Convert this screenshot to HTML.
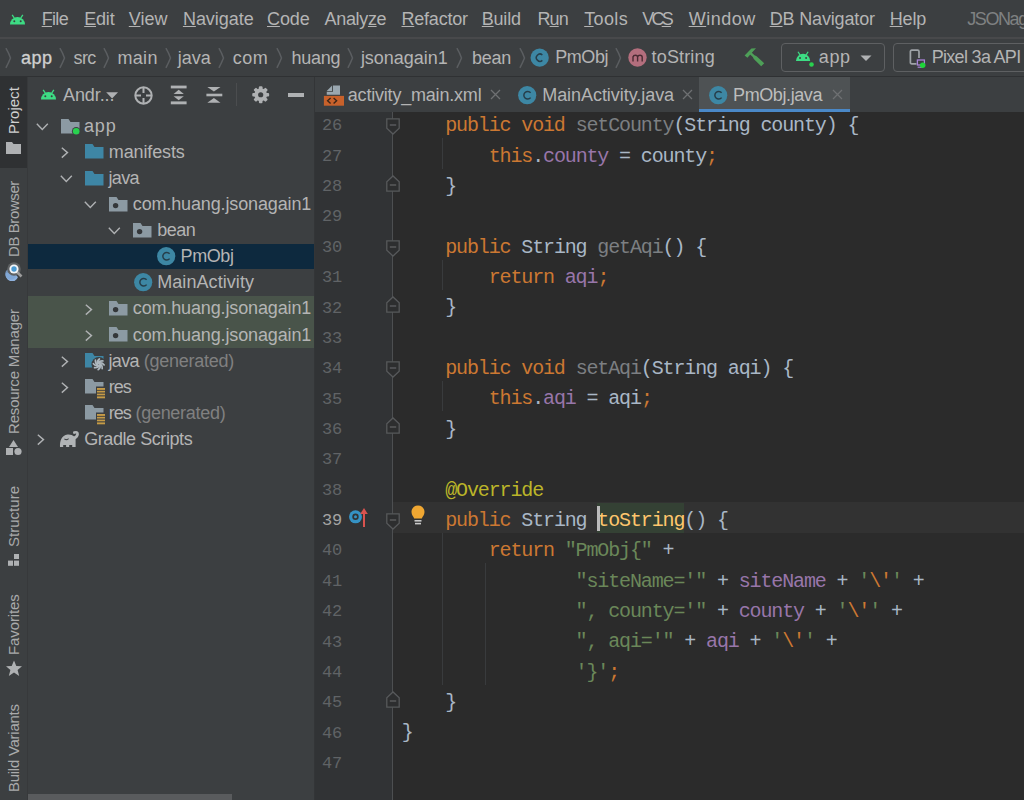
<!DOCTYPE html><html><head><meta charset="utf-8"><style>
html,body{margin:0;padding:0}
body{width:1024px;height:800px;overflow:hidden;position:relative;background:#3C3F41;font-family:"Liberation Sans",sans-serif}
.r{position:absolute;display:block}
.t{position:absolute;white-space:pre;font-family:"Liberation Sans",sans-serif;line-height:1.15}
.t u{text-decoration:underline;text-underline-offset:1px}
.m{position:absolute;white-space:pre;font-family:"Liberation Mono",monospace;line-height:1.133}
</style></head><body>
<div class="r" style="left:0px;top:0px;width:1024px;height:37px;background:#3C3F41;"></div>
<div class="r" style="left:0px;top:37px;width:1024px;height:2px;background:#48494B;"></div>
<div class="r" style="left:0px;top:39px;width:1024px;height:37px;background:#3C3F41;"></div>
<div class="r" style="left:0px;top:75.5px;width:1024px;height:1.5px;background:#2F3133;"></div>
<div class="r" style="left:0px;top:77px;width:27px;height:723px;background:#3C3F41;"></div>
<div class="r" style="left:0px;top:77px;width:27px;height:91px;background:#2F3133;"></div>
<div class="r" style="left:27px;top:77px;width:1px;height:723px;background:#37393B;"></div>
<div class="r" style="left:28px;top:77px;width:286px;height:723px;background:#3C3F41;"></div>
<div class="r" style="left:314px;top:77px;width:1px;height:723px;background:#333537;"></div>
<div class="r" style="left:315px;top:77px;width:709px;height:35px;background:#3C3F41;"></div>
<div class="r" style="left:699px;top:77px;width:151px;height:35px;background:#4E5254;"></div>
<div class="r" style="left:699px;top:108.5px;width:151px;height:4.5px;background:#4A88C7;"></div>
<div class="r" style="left:315px;top:112px;width:77px;height:688px;background:#313335;"></div>
<div class="r" style="left:392px;top:112px;width:1px;height:688px;background:#4D4F51;"></div>
<div class="r" style="left:393px;top:112px;width:631px;height:688px;background:#2B2B2B;"></div>
<svg class="r" style="left:9px;top:13.8px;" width="21" height="18" viewBox="0 0 21 18"><g transform="scale(1.0)"><path d="M1 10.5 A7.5 7.5 0 0 1 16 10.5 Z" fill="#3DDC84"/><line x1="3.2" y1="0.8" x2="5.2" y2="4" stroke="#3DDC84" stroke-width="1.3"/><line x1="13.8" y1="0.8" x2="11.8" y2="4" stroke="#3DDC84" stroke-width="1.3"/><circle cx="5.3" cy="7.3" r="1" fill="#3C3F41"/><circle cx="11.7" cy="7.3" r="1" fill="#3C3F41"/></g></svg>
<div class="t" style="left:41.7px;top:8.7px;font-size:18px;color:#B4B4B4;letter-spacing:-0.67px"><u>F</u>ile</div>
<div class="t" style="left:84.2px;top:8.7px;font-size:18px;color:#B4B4B4;letter-spacing:-0.17px"><u>E</u>dit</div>
<div class="t" style="left:128.8px;top:8.7px;font-size:18px;color:#B4B4B4;letter-spacing:0.00px"><u>V</u>iew</div>
<div class="t" style="left:182.9px;top:8.7px;font-size:18px;color:#B4B4B4;letter-spacing:-0.03px"><u>N</u>avigate</div>
<div class="t" style="left:267.0px;top:8.7px;font-size:18px;color:#B4B4B4;letter-spacing:-0.11px"><u>C</u>ode</div>
<div class="t" style="left:324.6px;top:8.7px;font-size:18px;color:#B4B4B4;letter-spacing:-0.34px">Analy<u>z</u>e</div>
<div class="t" style="left:401.5px;top:8.7px;font-size:18px;color:#B4B4B4;letter-spacing:-0.22px"><u>R</u>efactor</div>
<div class="t" style="left:481.8px;top:8.7px;font-size:18px;color:#B4B4B4;letter-spacing:-0.23px"><u>B</u>uild</div>
<div class="t" style="left:537.5px;top:8.7px;font-size:18px;color:#B4B4B4;letter-spacing:-0.91px">R<u>u</u>n</div>
<div class="t" style="left:584.2px;top:8.7px;font-size:18px;color:#B4B4B4;letter-spacing:0.37px"><u>T</u>ools</div>
<div class="t" style="left:642.2px;top:8.7px;font-size:18px;color:#B4B4B4;letter-spacing:-2.76px">VC<u>S</u></div>
<div class="t" style="left:688.7px;top:8.7px;font-size:18px;color:#B4B4B4;letter-spacing:0.50px"><u>W</u>indow</div>
<div class="t" style="left:769.7px;top:8.7px;font-size:18px;color:#B4B4B4;letter-spacing:-0.16px"><u>D</u>B Navigator</div>
<div class="t" style="left:889.7px;top:8.7px;font-size:18px;color:#B4B4B4;letter-spacing:-0.11px"><u>H</u>elp</div>
<div class="t" style="left:967.2px;top:8.7px;font-size:18px;color:#7F8182;letter-spacing:0.00px;letter-spacing:-1.4px">JSONagain1 [</div>
<svg class="r" style="left:5px;top:48px;" width="7" height="21" viewBox="0 0 7 21"><path d="M0.9 0.2 Q3.5 4.5 5.5 10 Q3.5 15 0.9 19.8" fill="none" stroke="#5B5E61" stroke-width="1.5"/></svg>
<div class="t" style="left:20.9px;top:47.8px;font-size:18px;color:#CFCFCF;letter-spacing:0.53px;-webkit-text-stroke:0.35px #CFCFCF;">app</div>
<svg class="r" style="left:59.3px;top:48px;" width="7" height="21" viewBox="0 0 7 21"><path d="M0.9 0.2 Q3.5 4.5 5.5 10 Q3.5 15 0.9 19.8" fill="none" stroke="#5B5E61" stroke-width="1.5"/></svg>
<div class="t" style="left:73.6px;top:47.8px;font-size:18px;color:#B4B4B4;letter-spacing:-0.65px;">src</div>
<svg class="r" style="left:103px;top:48px;" width="7" height="21" viewBox="0 0 7 21"><path d="M0.9 0.2 Q3.5 4.5 5.5 10 Q3.5 15 0.9 19.8" fill="none" stroke="#5B5E61" stroke-width="1.5"/></svg>
<div class="t" style="left:117.5px;top:47.8px;font-size:18px;color:#B4B4B4;letter-spacing:0.30px;">main</div>
<svg class="r" style="left:164.7px;top:48px;" width="7" height="21" viewBox="0 0 7 21"><path d="M0.9 0.2 Q3.5 4.5 5.5 10 Q3.5 15 0.9 19.8" fill="none" stroke="#5B5E61" stroke-width="1.5"/></svg>
<div class="t" style="left:177.8px;top:47.8px;font-size:18px;color:#B4B4B4;letter-spacing:-0.04px;">java</div>
<svg class="r" style="left:218px;top:48px;" width="7" height="21" viewBox="0 0 7 21"><path d="M0.9 0.2 Q3.5 4.5 5.5 10 Q3.5 15 0.9 19.8" fill="none" stroke="#5B5E61" stroke-width="1.5"/></svg>
<div class="t" style="left:232.7px;top:47.8px;font-size:18px;color:#B4B4B4;letter-spacing:0.50px;">com</div>
<svg class="r" style="left:275.6px;top:48px;" width="7" height="21" viewBox="0 0 7 21"><path d="M0.9 0.2 Q3.5 4.5 5.5 10 Q3.5 15 0.9 19.8" fill="none" stroke="#5B5E61" stroke-width="1.5"/></svg>
<div class="t" style="left:291.4px;top:47.8px;font-size:18px;color:#B4B4B4;letter-spacing:-0.24px;">huang</div>
<svg class="r" style="left:347px;top:48px;" width="7" height="21" viewBox="0 0 7 21"><path d="M0.9 0.2 Q3.5 4.5 5.5 10 Q3.5 15 0.9 19.8" fill="none" stroke="#5B5E61" stroke-width="1.5"/></svg>
<div class="t" style="left:360.9px;top:47.8px;font-size:18px;color:#B4B4B4;letter-spacing:-0.03px;">jsonagain1</div>
<svg class="r" style="left:456px;top:48px;" width="7" height="21" viewBox="0 0 7 21"><path d="M0.9 0.2 Q3.5 4.5 5.5 10 Q3.5 15 0.9 19.8" fill="none" stroke="#5B5E61" stroke-width="1.5"/></svg>
<div class="t" style="left:472.0px;top:47.8px;font-size:18px;color:#B4B4B4;letter-spacing:-0.28px;">bean</div>
<svg class="r" style="left:518.5px;top:48px;" width="7" height="21" viewBox="0 0 7 21"><path d="M0.9 0.2 Q3.5 4.5 5.5 10 Q3.5 15 0.9 19.8" fill="none" stroke="#5B5E61" stroke-width="1.5"/></svg>
<svg class="r" style="left:530px;top:47.6px;" width="19.3" height="19.3" viewBox="0 0 19.3 19.3"><circle cx="9.65" cy="9.65" r="9.15" fill="#3D87A4"/><path d="M12.350000000000001 6.95 A3.6 3.6 0 1 0 12.350000000000001 12.350000000000001" fill="none" stroke="#263E4A" stroke-width="1.5"/></svg>
<div class="t" style="left:555.2px;top:47.3px;font-size:18px;color:#B4B4B4;letter-spacing:-0.43px;">PmObj</div>
<svg class="r" style="left:615px;top:48px;" width="7" height="21" viewBox="0 0 7 21"><path d="M0.9 0.2 Q3.5 4.5 5.5 10 Q3.5 15 0.9 19.8" fill="none" stroke="#5B5E61" stroke-width="1.5"/></svg>
<svg class="r" style="left:627.5px;top:47.6px;" width="19.5" height="19.5" viewBox="0 0 19.5 19.5"><circle cx="9.5" cy="9.5" r="9.2" fill="#B36E7D"/><path d="M5 13.6 V8.2 M5 9.2 Q5.4 7.3 7.4 7.3 Q9.6 7.3 9.6 9.2 V13.6 M9.6 9.2 Q10 7.3 12 7.3 Q14.2 7.3 14.2 9.2 V13.6" fill="none" stroke="#4A2B33" stroke-width="1.4"/></svg>
<div class="t" style="left:651.6px;top:47.3px;font-size:18px;color:#B4B4B4;letter-spacing:0.15px;">toString</div>
<svg class="r" style="left:735px;top:40px;" width="40" height="32" viewBox="0 0 40 32"><path d="M9.6 15.4 L16.4 8.6 L21 8.3 L17.5 12 L12.4 17.8 Z" fill="#4E9F58"/><path d="M15.5 11.5 L19.5 15.3 L21.6 16.2 L29.2 23.3 L26.2 26.3 L18.8 19 L17.8 17 L14 13.6 Z" fill="#4E9F58"/></svg>
<div class="r" style="left:780.5px;top:43px;width:104.5px;height:29px;background:transparent;border:1.3px solid #5E6062;border-radius:4px;box-sizing:border-box"></div>
<svg class="r" style="left:794.5px;top:51px;" width="21" height="18" viewBox="0 0 21 18"><g transform="scale(0.95)"><path d="M1 10.5 A7.5 7.5 0 0 1 16 10.5 Z" fill="#3DDC84"/><line x1="3.2" y1="0.8" x2="5.2" y2="4" stroke="#3DDC84" stroke-width="1.3"/><line x1="13.8" y1="0.8" x2="11.8" y2="4" stroke="#3DDC84" stroke-width="1.3"/><circle cx="5.3" cy="7.3" r="1" fill="#3C3F41"/><circle cx="11.7" cy="7.3" r="1" fill="#3C3F41"/></g><circle cx="16.5" cy="13.5" r="3" fill="#3C3F41"/><circle cx="16.5" cy="13.5" r="2.3" fill="#29D14F"/></svg>
<div class="t" style="left:818.8px;top:47.3px;font-size:18px;color:#B4B4B4;letter-spacing:0.63px;">app</div>
<svg class="r" style="left:860px;top:55px;" width="12" height="7" viewBox="0 0 12 7"><path d="M0.5 0.5 L11.5 0.5 L6 6 Z" fill="#AFB1B3"/></svg>
<div class="r" style="left:892.5px;top:43px;width:140px;height:29px;background:transparent;border:1.3px solid #5E6062;border-radius:4px;box-sizing:border-box"></div>
<svg class="r" style="left:908px;top:48px;" width="22" height="22" viewBox="0 0 22 22"><path d="M8.5 15.8 H3.8 Q2.4 15.8 2.4 14.4 V3.6 Q2.4 2.2 3.8 2.2 H9.6 Q11 2.2 11 3.6 V10" fill="none" stroke="#9EA3A7" stroke-width="1.7"/><rect x="9.4" y="12" width="7" height="5" fill="none" stroke="#A883D8" stroke-width="1.3"/><path d="M9.6 19.2 H15" stroke="#A883D8" stroke-width="1.2"/><circle cx="14.7" cy="17.2" r="2.7" fill="#1ED63A"/></svg>
<div class="t" style="left:931.7px;top:47.3px;font-size:18px;color:#B4B4B4;letter-spacing:-0.69px;">Pixel 3a API</div>
<div class="t" style="left:4.6px;top:133.5px;font-size:15px;color:#D0D0D0;letter-spacing:0.02px;transform-origin:0 0;transform:rotate(-90deg);line-height:17.2px">Project</div>
<svg class="r" style="left:6px;top:140.5px;" width="16" height="14" viewBox="0 0 16 14"><path d="M0 1 L6 1 L7.5 3 L15 3 L15 13 L0 13 Z" fill="#AFB1B3"/></svg>
<div class="t" style="left:4.6px;top:257.2px;font-size:15px;color:#A9AAAB;letter-spacing:-0.41px;transform-origin:0 0;transform:rotate(-90deg);line-height:17.2px">DB Browser</div>
<svg class="r" style="left:4px;top:261px;" width="20" height="20" viewBox="0 0 20 20"><path d="M2 12 A6 6 0 0 0 14 16 L8 11 Z" fill="#8FB2DE"/><circle cx="7" cy="13" r="5.8" fill="#7EA4D4" opacity="0.85"/><circle cx="10" cy="8" r="6.8" fill="#5F6264"/><line x1="13" y1="11" x2="17.5" y2="15.5" stroke="#9C9C9C" stroke-width="2.6"/><circle cx="10" cy="8" r="4.6" fill="#F2F5F8"/><circle cx="10" cy="8" r="2.7" fill="#4A9AD2"/></svg>
<div class="t" style="left:4.6px;top:434px;font-size:15px;color:#A9AAAB;letter-spacing:-0.17px;transform-origin:0 0;transform:rotate(-90deg);line-height:17.2px">Resource Manager</div>
<svg class="r" style="left:5px;top:439.2px;" width="18" height="17" viewBox="0 0 18 17"><path d="M8.5 1 L13 8 L4 8 Z" fill="#AFB1B3"/><rect x="1" y="9" width="7" height="7" fill="#AFB1B3"/><circle cx="13" cy="12.5" r="3.6" fill="#AFB1B3"/></svg>
<div class="t" style="left:4.6px;top:547px;font-size:15px;color:#A9AAAB;letter-spacing:0.02px;transform-origin:0 0;transform:rotate(-90deg);line-height:17.2px">Structure</div>
<svg class="r" style="left:7px;top:553px;" width="14" height="14" viewBox="0 0 14 14"><rect x="1" y="7.6" width="5" height="5.2" fill="#AFB1B3"/><rect x="7" y="7.6" width="5" height="5.2" fill="#AFB1B3"/><rect x="7" y="1" width="5" height="5" fill="#AFB1B3"/></svg>
<div class="t" style="left:4.6px;top:654.8px;font-size:15px;color:#A9AAAB;letter-spacing:-0.11px;transform-origin:0 0;transform:rotate(-90deg);line-height:17.2px">Favorites</div>
<svg class="r" style="left:5px;top:660px;" width="18" height="17" viewBox="0 0 18 17"><path d="M9 0.5 L11.3 6 L17 6.3 L12.6 10 L14.2 16 L9 12.6 L3.8 16 L5.4 10 L1 6.3 L6.7 6 Z" fill="#AFB1B3"/></svg>
<div class="t" style="left:4.6px;top:792.4px;font-size:15px;color:#A9AAAB;letter-spacing:-0.27px;transform-origin:0 0;transform:rotate(-90deg);line-height:17.2px">Build Variants</div>
<svg class="r" style="left:40px;top:88.5px;" width="21" height="18" viewBox="0 0 21 18"><g transform="scale(1.0)"><path d="M1 10.5 A7.5 7.5 0 0 1 16 10.5 Z" fill="#3DDC84"/><line x1="3.2" y1="0.8" x2="5.2" y2="4" stroke="#3DDC84" stroke-width="1.3"/><line x1="13.8" y1="0.8" x2="11.8" y2="4" stroke="#3DDC84" stroke-width="1.3"/><circle cx="5.3" cy="7.3" r="1" fill="#3C3F41"/><circle cx="11.7" cy="7.3" r="1" fill="#3C3F41"/></g></svg>
<div class="t" style="left:63.0px;top:84.7px;font-size:18px;color:#B4B4B4;letter-spacing:-0.09px;">Andr...</div>
<svg class="r" style="left:105.5px;top:91.6px;" width="13" height="8" viewBox="0 0 13 8"><path d="M0.2 0.2 L12 0.2 L6.1 6.4 Z" fill="#AFB1B3"/></svg>
<svg class="r" style="left:133px;top:85px;" width="21" height="21" viewBox="0 0 21 21"><circle cx="10.5" cy="10.5" r="8.2" fill="none" stroke="#AFB1B3" stroke-width="2"/><path d="M10.5 2 V8 M10.5 13 V19 M2 10.5 H8 M13 10.5 H19" stroke="#AFB1B3" stroke-width="2"/></svg>
<svg class="r" style="left:169px;top:84px;" width="20" height="22" viewBox="0 0 20 22"><g fill="#AFB1B3"><rect x="1.8" y="1.6" width="15.8" height="2.8"/><rect x="1.8" y="17.4" width="15.8" height="2.9"/><path d="M4.6 10 L9.7 5.7 L14.8 10 Z"/><path d="M4.6 12.2 L9.7 16.2 L14.8 12.2 Z"/></g></svg>
<svg class="r" style="left:205px;top:84px;" width="20" height="22" viewBox="0 0 20 22"><g fill="#AFB1B3"><rect x="1.4" y="9.7" width="15.9" height="2.6"/><path d="M2.3 3 L15.5 3 L8.9 7.4 Z"/><path d="M2.3 18.8 L15.5 18.8 L8.9 14 Z"/></g></svg>
<div class="r" style="left:236px;top:82.6px;width:1px;height:23px;background:#4B4D4F;"></div>
<svg class="r" style="left:252px;top:86.2px;" width="18" height="18" viewBox="0 0 18 18"><g fill="#AFB1B3"><circle cx="8.7" cy="8.75" r="6.4"/><rect x="6.9" y="0.3" width="3.6" height="5" rx="1" transform="rotate(0 8.7 8.75)"/><rect x="6.9" y="0.3" width="3.6" height="5" rx="1" transform="rotate(45 8.7 8.75)"/><rect x="6.9" y="0.3" width="3.6" height="5" rx="1" transform="rotate(90 8.7 8.75)"/><rect x="6.9" y="0.3" width="3.6" height="5" rx="1" transform="rotate(135 8.7 8.75)"/><rect x="6.9" y="0.3" width="3.6" height="5" rx="1" transform="rotate(180 8.7 8.75)"/><rect x="6.9" y="0.3" width="3.6" height="5" rx="1" transform="rotate(225 8.7 8.75)"/><rect x="6.9" y="0.3" width="3.6" height="5" rx="1" transform="rotate(270 8.7 8.75)"/><rect x="6.9" y="0.3" width="3.6" height="5" rx="1" transform="rotate(315 8.7 8.75)"/></g><circle cx="8.7" cy="8.75" r="2.6" fill="#3C3F41"/></svg>
<div class="r" style="left:287.8px;top:93.2px;width:16.2px;height:3.5px;background:#AFB1B3;"></div>
<div class="r" style="left:28px;top:243.8px;width:286px;height:25.2px;background:#0D293E;"></div>
<div class="r" style="left:28px;top:296.0px;width:286px;height:52.2px;background:#49544A;"></div>
<svg class="r" style="left:35.5px;top:122.89999999999999px;" width="13" height="8" viewBox="0 0 13 8"><polyline points="0.8,0.8 6.3,6.5 11.8,0.8" fill="none" stroke="#AFB1B3" stroke-width="1.4"/></svg>
<svg class="r" style="left:60.8px;top:119.3px;" width="22" height="20" viewBox="0 0 22 20"><path d="M0 0 L7.5 0 L9.5 3 L18.5 3 L18.5 14.6 L0 14.6 Z" fill="#8C9AA3"/><circle cx="15.2" cy="12.3" r="4.3" fill="#3C3F41"/><circle cx="15.2" cy="12.3" r="3.3" fill="#29D14F"/></svg>
<div class="t" style="left:83.9px;top:115.7px;font-size:18px;color:#B4B4B4;letter-spacing:0.88px;">app</div>
<svg class="r" style="left:61.2px;top:146.9px;" width="8" height="12" viewBox="0 0 8 12"><polyline points="0.8,0.8 6.5,5.6 0.8,10.6" fill="none" stroke="#AFB1B3" stroke-width="1.4"/></svg>
<svg class="r" style="left:84.9px;top:144.4px;" width="22" height="20" viewBox="0 0 22 20"><path d="M0 0 L7.5 0 L9.5 3 L18.5 3 L18.5 14.6 L0 14.6 Z" fill="#3E86A5"/></svg>
<div class="t" style="left:108.8px;top:141.8px;font-size:18px;color:#B4B4B4;letter-spacing:-0.13px;">manifests</div>
<svg class="r" style="left:59.5px;top:175.1px;" width="13" height="8" viewBox="0 0 13 8"><polyline points="0.8,0.8 6.3,6.5 11.8,0.8" fill="none" stroke="#AFB1B3" stroke-width="1.4"/></svg>
<svg class="r" style="left:84.9px;top:170.5px;" width="22" height="20" viewBox="0 0 22 20"><path d="M0 0 L7.5 0 L9.5 3 L18.5 3 L18.5 14.6 L0 14.6 Z" fill="#3E86A5"/></svg>
<div class="t" style="left:108.5px;top:167.9px;font-size:18px;color:#B4B4B4;letter-spacing:-0.67px;">java</div>
<svg class="r" style="left:84.3px;top:201.20000000000002px;" width="13" height="8" viewBox="0 0 13 8"><polyline points="0.8,0.8 6.3,6.5 11.8,0.8" fill="none" stroke="#AFB1B3" stroke-width="1.4"/></svg>
<svg class="r" style="left:109.1px;top:196.60000000000002px;" width="22" height="20" viewBox="0 0 22 20"><path d="M0 0 L7.5 0 L9.5 3 L18.5 3 L18.5 14.6 L0 14.6 Z" fill="#8C9AA3"/><circle cx="6.6" cy="8.6" r="2.7" fill="#34373A"/></svg>
<div class="t" style="left:132.8px;top:194.0px;font-size:18px;color:#B4B4B4;letter-spacing:-0.14px;">com.huang.jsonagain1</div>
<svg class="r" style="left:108.2px;top:227.29999999999998px;" width="13" height="8" viewBox="0 0 13 8"><polyline points="0.8,0.8 6.3,6.5 11.8,0.8" fill="none" stroke="#AFB1B3" stroke-width="1.4"/></svg>
<svg class="r" style="left:133px;top:222.7px;" width="22" height="20" viewBox="0 0 22 20"><path d="M0 0 L7.5 0 L9.5 3 L18.5 3 L18.5 14.6 L0 14.6 Z" fill="#8C9AA3"/><circle cx="6.6" cy="8.6" r="2.7" fill="#34373A"/></svg>
<div class="t" style="left:157.3px;top:220.1px;font-size:18px;color:#B4B4B4;letter-spacing:-0.51px;">bean</div>
<svg class="r" style="left:156.8px;top:247.3px;" width="20" height="20" viewBox="0 0 20 20"><circle cx="9.2" cy="9.2" r="9.1" fill="#3D87A4"/><path d="M12.6 6.8 A3.8 3.8 0 1 0 12.6 11.6" fill="none" stroke="#263E4A" stroke-width="1.5"/></svg>
<div class="t" style="left:180.5px;top:246.2px;font-size:18px;color:#B4B4B4;letter-spacing:-0.38px;">PmObj</div>
<svg class="r" style="left:133.6px;top:273.40000000000003px;" width="20" height="20" viewBox="0 0 20 20"><circle cx="9.2" cy="9.2" r="9.1" fill="#3D87A4"/><path d="M12.6 6.8 A3.8 3.8 0 1 0 12.6 11.6" fill="none" stroke="#263E4A" stroke-width="1.5"/></svg>
<div class="t" style="left:157.2px;top:272.3px;font-size:18px;color:#B4B4B4;letter-spacing:0.07px;">MainActivity</div>
<svg class="r" style="left:85.2px;top:303.5px;" width="8" height="12" viewBox="0 0 8 12"><polyline points="0.8,0.8 6.5,5.6 0.8,10.6" fill="none" stroke="#AFB1B3" stroke-width="1.4"/></svg>
<svg class="r" style="left:109.1px;top:301.0px;" width="22" height="20" viewBox="0 0 22 20"><path d="M0 0 L7.5 0 L9.5 3 L18.5 3 L18.5 14.6 L0 14.6 Z" fill="#8C9AA3"/><circle cx="6.6" cy="8.6" r="2.7" fill="#34373A"/></svg>
<div class="t" style="left:132.8px;top:298.4px;font-size:18px;color:#B4B4B4;letter-spacing:-0.14px;">com.huang.jsonagain1</div>
<svg class="r" style="left:85.2px;top:329.6px;" width="8" height="12" viewBox="0 0 8 12"><polyline points="0.8,0.8 6.5,5.6 0.8,10.6" fill="none" stroke="#AFB1B3" stroke-width="1.4"/></svg>
<svg class="r" style="left:109.1px;top:327.1px;" width="22" height="20" viewBox="0 0 22 20"><path d="M0 0 L7.5 0 L9.5 3 L18.5 3 L18.5 14.6 L0 14.6 Z" fill="#8C9AA3"/><circle cx="6.6" cy="8.6" r="2.7" fill="#34373A"/></svg>
<div class="t" style="left:132.8px;top:324.5px;font-size:18px;color:#B4B4B4;letter-spacing:-0.14px;">com.huang.jsonagain1</div>
<svg class="r" style="left:61.2px;top:355.7px;" width="8" height="12" viewBox="0 0 8 12"><polyline points="0.8,0.8 6.5,5.6 0.8,10.6" fill="none" stroke="#AFB1B3" stroke-width="1.4"/></svg>
<svg class="r" style="left:85px;top:353.2px;" width="22" height="20" viewBox="0 0 22 20"><path d="M0 0 L7.5 0 L9.5 3 L18.5 3 L18.5 14.6 L0 14.6 Z" fill="#3E86A5"/><circle cx="13.8" cy="11.35" r="7.3" fill="#3C3F41"/><path d="M15.00 11.35 Q17.40 11.53 17.16 15.58 M14.65 12.20 Q16.22 14.02 13.18 16.71 M13.80 12.55 Q13.62 14.95 9.57 14.71 M12.95 12.20 Q11.13 13.77 8.44 10.73 M12.60 11.35 Q10.20 11.17 10.44 7.12 M12.95 10.50 Q11.38 8.68 14.42 5.99 M13.80 10.15 Q13.98 7.75 18.03 7.99 M14.65 10.50 Q16.47 8.93 19.16 11.97 " fill="none" stroke="#AEB8BF" stroke-width="1.7" stroke-linecap="round"/></svg>
<div class="t" style="left:108.5px;top:350.6px;font-size:18px;color:#B4B4B4;letter-spacing:-0.67px;">java</div>
<div class="t" style="left:143.8px;top:350.6px;font-size:18px;color:#808080;letter-spacing:-0.26px;">(generated)</div>
<svg class="r" style="left:61.2px;top:381.8px;" width="8" height="12" viewBox="0 0 8 12"><polyline points="0.8,0.8 6.5,5.6 0.8,10.6" fill="none" stroke="#AFB1B3" stroke-width="1.4"/></svg>
<svg class="r" style="left:85px;top:379.3px;" width="22" height="20" viewBox="0 0 22 20"><path d="M0 0 L7.5 0 L9.5 3 L18.5 3 L18.5 14.6 L0 14.6 Z" fill="#8C9AA3"/><rect x="11" y="7.5" width="9" height="11.5" fill="#3C3F41"/><g fill="#C69B46"><rect x="12" y="9" width="8" height="1.9"/><rect x="12" y="11.8" width="8" height="1.7"/><rect x="12" y="14.6" width="8" height="1.7"/><rect x="12" y="17.4" width="8" height="1.9"/></g></svg>
<div class="t" style="left:108.7px;top:376.7px;font-size:18px;color:#B4B4B4;letter-spacing:-1.00px;">res</div>
<svg class="r" style="left:85px;top:405.40000000000003px;" width="22" height="20" viewBox="0 0 22 20"><path d="M0 0 L7.5 0 L9.5 3 L18.5 3 L18.5 14.6 L0 14.6 Z" fill="#8C9AA3"/><rect x="11" y="7.5" width="9" height="11.5" fill="#3C3F41"/><g fill="#C69B46"><rect x="12" y="9" width="8" height="1.9"/><rect x="12" y="11.8" width="8" height="1.7"/><rect x="12" y="14.6" width="8" height="1.7"/><rect x="12" y="17.4" width="8" height="1.9"/></g></svg>
<div class="t" style="left:108.7px;top:402.8px;font-size:18px;color:#B4B4B4;letter-spacing:-1.00px;">res</div>
<div class="t" style="left:135.5px;top:402.8px;font-size:18px;color:#808080;letter-spacing:-0.29px;">(generated)</div>
<svg class="r" style="left:36.5px;top:434.00000000000006px;" width="8" height="12" viewBox="0 0 8 12"><polyline points="0.8,0.8 6.5,5.6 0.8,10.6" fill="none" stroke="#AFB1B3" stroke-width="1.4"/></svg>
<svg class="r" style="left:56px;top:428px;" width="28" height="22" viewBox="0 0 28 22"><path d="M4 19 C3.8 13 5.5 7.5 11.5 6.6 C14.5 6.3 16.5 7.3 18.2 8.6 L19.6 10 L19.6 19 L16.2 19 L16.2 16.9 L13.2 16.9 L13.2 19 L10.1 19 L10.1 16.9 L7.2 16.9 L7.2 19 Z" fill="#B1B4B6"/><path d="M17.8 10.2 Q21.3 9 21.6 6 Q21.6 3.6 18.3 4.6" fill="none" stroke="#B1B4B6" stroke-width="2.6" stroke-linecap="round"/><path d="M8.4 10.8 Q10.4 12.6 12.6 10.6" fill="none" stroke="#45484A" stroke-width="1.1"/></svg>
<div class="t" style="left:84.2px;top:428.9px;font-size:18px;color:#B4B4B4;letter-spacing:-0.43px;">Gradle Scripts</div>
<div class="r" style="left:28px;top:794px;width:204px;height:6px;background:#595B5D;"></div>
<svg class="r" style="left:320px;top:80px;" width="30" height="30" viewBox="0 0 30 30"><path d="M13 5.6 H20 V14.8 H6.75 V11.8 H13 Z" fill="#9AA7B0"/><path d="M6.75 10.9 L12.1 5.6 L12.1 10.9 Z" fill="#9AA7B0"/><rect x="3.9" y="15.9" width="20.1" height="9.8" fill="#C8612B"/><path d="M10.6 18 L7.6 20.8 L10.6 23.6 M13.6 18 L16.6 20.8 L13.6 23.6" fill="none" stroke="#3B2518" stroke-width="1.4"/></svg>
<div class="t" style="left:347.8px;top:84.7px;font-size:18px;color:#B4B4B4;letter-spacing:-0.20px;">activity_main.xml</div>
<svg class="r" style="left:490.3px;top:89px;" width="11" height="11" viewBox="0 0 11 11"><path d="M1 1 L10 10 M10 1 L1 10" stroke="#6E7072" stroke-width="1.3"/></svg>
<svg class="r" style="left:518.2px;top:85.5px;" width="20" height="20" viewBox="0 0 20 20"><circle cx="9.2" cy="9.2" r="9.1" fill="#3D87A4"/><path d="M12.6 6.8 A3.8 3.8 0 1 0 12.6 11.6" fill="none" stroke="#263E4A" stroke-width="1.5"/></svg>
<div class="t" style="left:542.2px;top:84.7px;font-size:18px;color:#B4B4B4;letter-spacing:-0.05px;">MainActivity.java</div>
<svg class="r" style="left:682.3px;top:89px;" width="11" height="11" viewBox="0 0 11 11"><path d="M1 1 L10 10 M10 1 L1 10" stroke="#6E7072" stroke-width="1.3"/></svg>
<svg class="r" style="left:709px;top:85.5px;" width="20" height="20" viewBox="0 0 20 20"><circle cx="9.2" cy="9.2" r="9.1" fill="#3D87A4"/><path d="M12.6 6.8 A3.8 3.8 0 1 0 12.6 11.6" fill="none" stroke="#263E4A" stroke-width="1.5"/></svg>
<div class="t" style="left:733.1px;top:84.7px;font-size:18px;color:#BDBDBD;letter-spacing:-0.41px;">PmObj.java</div>
<svg class="r" style="left:831.7px;top:89px;" width="11" height="11" viewBox="0 0 11 11"><path d="M1 1 L10 10 M10 1 L1 10" stroke="#6E7072" stroke-width="1.3"/></svg>
<div class="r" style="left:393px;top:502.4800000000001px;width:631px;height:30.36px;background:#323232;"></div>
<div class="r" style="left:442px;top:138.16000000000003px;width:1px;height:30.36px;background:#393B3D;"></div>
<div class="r" style="left:442px;top:259.6px;width:1px;height:30.36px;background:#393B3D;"></div>
<div class="r" style="left:442px;top:381.04px;width:1px;height:30.36px;background:#393B3D;"></div>
<div class="r" style="left:442px;top:532.8399999999999px;width:1px;height:151.8px;background:#393B3D;"></div>
<div class="r" style="left:485px;top:563.1999999999999px;width:1px;height:121.44px;background:#393B3D;"></div>
<div class="r" style="left:597.36px;top:503.2800000000001px;width:86.96px;height:29.86px;background:#344134;"></div>
<svg class="r" style="left:385.5px;top:118.1px;" width="14" height="17" viewBox="0 0 14 17"><path d="M0.8 0.8 L13.2 0.8 L13.2 10.3 L7 16 L0.8 10.3 Z" fill="#2D2E2F" stroke="#57595B" stroke-width="1.3"/><path d="M3.8 7 H10.2" stroke="#646668" stroke-width="1.2"/></svg>
<svg class="r" style="left:385.5px;top:239.54000000000002px;" width="14" height="17" viewBox="0 0 14 17"><path d="M0.8 0.8 L13.2 0.8 L13.2 10.3 L7 16 L0.8 10.3 Z" fill="#2D2E2F" stroke="#57595B" stroke-width="1.3"/><path d="M3.8 7 H10.2" stroke="#646668" stroke-width="1.2"/></svg>
<svg class="r" style="left:385.5px;top:360.98px;" width="14" height="17" viewBox="0 0 14 17"><path d="M0.8 0.8 L13.2 0.8 L13.2 10.3 L7 16 L0.8 10.3 Z" fill="#2D2E2F" stroke="#57595B" stroke-width="1.3"/><path d="M3.8 7 H10.2" stroke="#646668" stroke-width="1.2"/></svg>
<svg class="r" style="left:385.5px;top:512.7800000000001px;" width="14" height="17" viewBox="0 0 14 17"><path d="M0.8 0.8 L13.2 0.8 L13.2 10.3 L7 16 L0.8 10.3 Z" fill="#2D2E2F" stroke="#57595B" stroke-width="1.3"/><path d="M3.8 7 H10.2" stroke="#646668" stroke-width="1.2"/></svg>
<svg class="r" style="left:385.5px;top:174.52px;" width="14" height="17" viewBox="0 0 14 17"><path d="M0.8 16.2 L13.2 16.2 L13.2 6.7 L7 1 L0.8 6.7 Z" fill="#2D2E2F" stroke="#57595B" stroke-width="1.3"/><path d="M3.8 10 H10.2" stroke="#646668" stroke-width="1.2"/></svg>
<svg class="r" style="left:385.5px;top:295.96px;" width="14" height="17" viewBox="0 0 14 17"><path d="M0.8 16.2 L13.2 16.2 L13.2 6.7 L7 1 L0.8 6.7 Z" fill="#2D2E2F" stroke="#57595B" stroke-width="1.3"/><path d="M3.8 10 H10.2" stroke="#646668" stroke-width="1.2"/></svg>
<svg class="r" style="left:385.5px;top:417.40000000000003px;" width="14" height="17" viewBox="0 0 14 17"><path d="M0.8 16.2 L13.2 16.2 L13.2 6.7 L7 1 L0.8 6.7 Z" fill="#2D2E2F" stroke="#57595B" stroke-width="1.3"/><path d="M3.8 10 H10.2" stroke="#646668" stroke-width="1.2"/></svg>
<svg class="r" style="left:385.5px;top:690.64px;" width="14" height="17" viewBox="0 0 14 17"><path d="M0.8 16.2 L13.2 16.2 L13.2 6.7 L7 1 L0.8 6.7 Z" fill="#2D2E2F" stroke="#57595B" stroke-width="1.3"/><path d="M3.8 10 H10.2" stroke="#646668" stroke-width="1.2"/></svg>
<div class="m" style="left:322px;top:116.3px;font-size:17px;letter-spacing:-0.1px;color:#606366">26</div>
<div class="m" style="left:401.7px;top:115.1px;font-size:20px;letter-spacing:-1.132px"><span style="color:#A9B7C6">    </span><span style="color:#CC7832">public void </span><span style="color:#7C7F82">setCounty</span><span style="color:#A9B7C6">(String county) {</span></div>
<div class="m" style="left:322px;top:146.7px;font-size:17px;letter-spacing:-0.1px;color:#606366">27</div>
<div class="m" style="left:401.7px;top:145.5px;font-size:20px;letter-spacing:-1.132px"><span style="color:#A9B7C6">        </span><span style="color:#CC7832">this</span><span style="color:#A9B7C6">.</span><span style="color:#9876AA">county</span><span style="color:#A9B7C6"> = county</span><span style="color:#CC7832">;</span></div>
<div class="m" style="left:322px;top:177.1px;font-size:17px;letter-spacing:-0.1px;color:#606366">28</div>
<div class="m" style="left:401.7px;top:175.9px;font-size:20px;letter-spacing:-1.132px"><span style="color:#A9B7C6">    }</span></div>
<div class="m" style="left:322px;top:207.4px;font-size:17px;letter-spacing:-0.1px;color:#606366">29</div>
<div class="m" style="left:322px;top:237.8px;font-size:17px;letter-spacing:-0.1px;color:#606366">30</div>
<div class="m" style="left:401.7px;top:236.6px;font-size:20px;letter-spacing:-1.132px"><span style="color:#A9B7C6">    </span><span style="color:#CC7832">public </span><span style="color:#A9B7C6">String </span><span style="color:#7C7F82">getAqi</span><span style="color:#A9B7C6">() {</span></div>
<div class="m" style="left:322px;top:268.1px;font-size:17px;letter-spacing:-0.1px;color:#606366">31</div>
<div class="m" style="left:401.7px;top:266.9px;font-size:20px;letter-spacing:-1.132px"><span style="color:#A9B7C6">        </span><span style="color:#CC7832">return </span><span style="color:#9876AA">aqi</span><span style="color:#CC7832">;</span></div>
<div class="m" style="left:322px;top:298.5px;font-size:17px;letter-spacing:-0.1px;color:#606366">32</div>
<div class="m" style="left:401.7px;top:297.3px;font-size:20px;letter-spacing:-1.132px"><span style="color:#A9B7C6">    }</span></div>
<div class="m" style="left:322px;top:328.9px;font-size:17px;letter-spacing:-0.1px;color:#606366">33</div>
<div class="m" style="left:322px;top:359.2px;font-size:17px;letter-spacing:-0.1px;color:#606366">34</div>
<div class="m" style="left:401.7px;top:358.0px;font-size:20px;letter-spacing:-1.132px"><span style="color:#A9B7C6">    </span><span style="color:#CC7832">public void </span><span style="color:#7C7F82">setAqi</span><span style="color:#A9B7C6">(String aqi) {</span></div>
<div class="m" style="left:322px;top:389.6px;font-size:17px;letter-spacing:-0.1px;color:#606366">35</div>
<div class="m" style="left:401.7px;top:388.4px;font-size:20px;letter-spacing:-1.132px"><span style="color:#A9B7C6">        </span><span style="color:#CC7832">this</span><span style="color:#A9B7C6">.</span><span style="color:#9876AA">aqi</span><span style="color:#A9B7C6"> = aqi</span><span style="color:#CC7832">;</span></div>
<div class="m" style="left:322px;top:419.9px;font-size:17px;letter-spacing:-0.1px;color:#606366">36</div>
<div class="m" style="left:401.7px;top:418.7px;font-size:20px;letter-spacing:-1.132px"><span style="color:#A9B7C6">    }</span></div>
<div class="m" style="left:322px;top:450.3px;font-size:17px;letter-spacing:-0.1px;color:#606366">37</div>
<div class="m" style="left:322px;top:480.7px;font-size:17px;letter-spacing:-0.1px;color:#606366">38</div>
<div class="m" style="left:401.7px;top:479.5px;font-size:20px;letter-spacing:-1.132px"><span style="color:#A9B7C6">    </span><span style="color:#BBB529">@Override</span></div>
<div class="m" style="left:322px;top:511.0px;font-size:17px;letter-spacing:-0.1px;color:#A4A3A3">39</div>
<div class="m" style="left:401.7px;top:509.8px;font-size:20px;letter-spacing:-1.132px"><span style="color:#A9B7C6">    </span><span style="color:#CC7832">public </span><span style="color:#A9B7C6">String </span><span style="color:#FFC66D">toString</span><span style="color:#A9B7C6">() {</span></div>
<div class="m" style="left:322px;top:541.4px;font-size:17px;letter-spacing:-0.1px;color:#606366">40</div>
<div class="m" style="left:401.7px;top:540.2px;font-size:20px;letter-spacing:-1.132px"><span style="color:#A9B7C6">        </span><span style="color:#CC7832">return </span><span style="color:#6A8759">&quot;PmObj{&quot;</span><span style="color:#A9B7C6"> +</span></div>
<div class="m" style="left:322px;top:571.7px;font-size:17px;letter-spacing:-0.1px;color:#606366">41</div>
<div class="m" style="left:401.7px;top:570.5px;font-size:20px;letter-spacing:-1.132px"><span style="color:#A9B7C6">                </span><span style="color:#6A8759">&quot;siteName=&#x27;&quot;</span><span style="color:#A9B7C6"> + </span><span style="color:#9876AA">siteName</span><span style="color:#A9B7C6"> + </span><span style="color:#6A8759">&#x27;</span><span style="color:#CC7832">\&#x27;</span><span style="color:#6A8759">&#x27;</span><span style="color:#A9B7C6"> +</span></div>
<div class="m" style="left:322px;top:602.1px;font-size:17px;letter-spacing:-0.1px;color:#606366">42</div>
<div class="m" style="left:401.7px;top:600.9px;font-size:20px;letter-spacing:-1.132px"><span style="color:#A9B7C6">                </span><span style="color:#6A8759">&quot;, county=&#x27;&quot;</span><span style="color:#A9B7C6"> + </span><span style="color:#9876AA">county</span><span style="color:#A9B7C6"> + </span><span style="color:#6A8759">&#x27;</span><span style="color:#CC7832">\&#x27;</span><span style="color:#6A8759">&#x27;</span><span style="color:#A9B7C6"> +</span></div>
<div class="m" style="left:322px;top:632.5px;font-size:17px;letter-spacing:-0.1px;color:#606366">43</div>
<div class="m" style="left:401.7px;top:631.3px;font-size:20px;letter-spacing:-1.132px"><span style="color:#A9B7C6">                </span><span style="color:#6A8759">&quot;, aqi=&#x27;&quot;</span><span style="color:#A9B7C6"> + </span><span style="color:#9876AA">aqi</span><span style="color:#A9B7C6"> + </span><span style="color:#6A8759">&#x27;</span><span style="color:#CC7832">\&#x27;</span><span style="color:#6A8759">&#x27;</span><span style="color:#A9B7C6"> +</span></div>
<div class="m" style="left:322px;top:662.8px;font-size:17px;letter-spacing:-0.1px;color:#606366">44</div>
<div class="m" style="left:401.7px;top:661.6px;font-size:20px;letter-spacing:-1.132px"><span style="color:#A9B7C6">                </span><span style="color:#6A8759">&#x27;}&#x27;</span><span style="color:#CC7832">;</span></div>
<div class="m" style="left:322px;top:693.2px;font-size:17px;letter-spacing:-0.1px;color:#606366">45</div>
<div class="m" style="left:401.7px;top:692.0px;font-size:20px;letter-spacing:-1.132px"><span style="color:#A9B7C6">    }</span></div>
<div class="m" style="left:322px;top:723.5px;font-size:17px;letter-spacing:-0.1px;color:#606366">46</div>
<div class="m" style="left:401.7px;top:722.3px;font-size:20px;letter-spacing:-1.132px"><span style="color:#A9B7C6">}</span></div>
<div class="m" style="left:322px;top:753.9px;font-size:17px;letter-spacing:-0.1px;color:#606366">47</div>
<div class="r" style="left:596.5px;top:506px;width:3px;height:25px;background:#BBBBBB;"></div>
<svg class="r" style="left:348px;top:506px;" width="22" height="22" viewBox="0 0 22 22"><circle cx="7.5" cy="10.8" r="6.5" fill="#3592C4"/><circle cx="7.5" cy="10.8" r="3.2" fill="#313335"/><circle cx="7.5" cy="10.8" r="1.5" fill="#3592C4"/><path d="M16 21 V6" stroke="#D9534F" stroke-width="2"/><path d="M12.2 8 L16 2 L19.8 8 Z" fill="#D9534F"/></svg>
<svg class="r" style="left:411px;top:505px;" width="16" height="21" viewBox="0 0 16 21"><path d="M7 0.5 C3 0.5 0.5 3.5 0.5 7 C0.5 10 2.5 11.5 3.2 13.5 L10.8 13.5 C11.5 11.5 13.5 10 13.5 7 C13.5 3.5 11 0.5 7 0.5 Z" fill="#F0A732"/><rect x="3.5" y="15" width="7" height="1.6" fill="#C9C9C9"/><rect x="4" y="17.8" width="6" height="1.6" fill="#C9C9C9"/></svg>
</body></html>
